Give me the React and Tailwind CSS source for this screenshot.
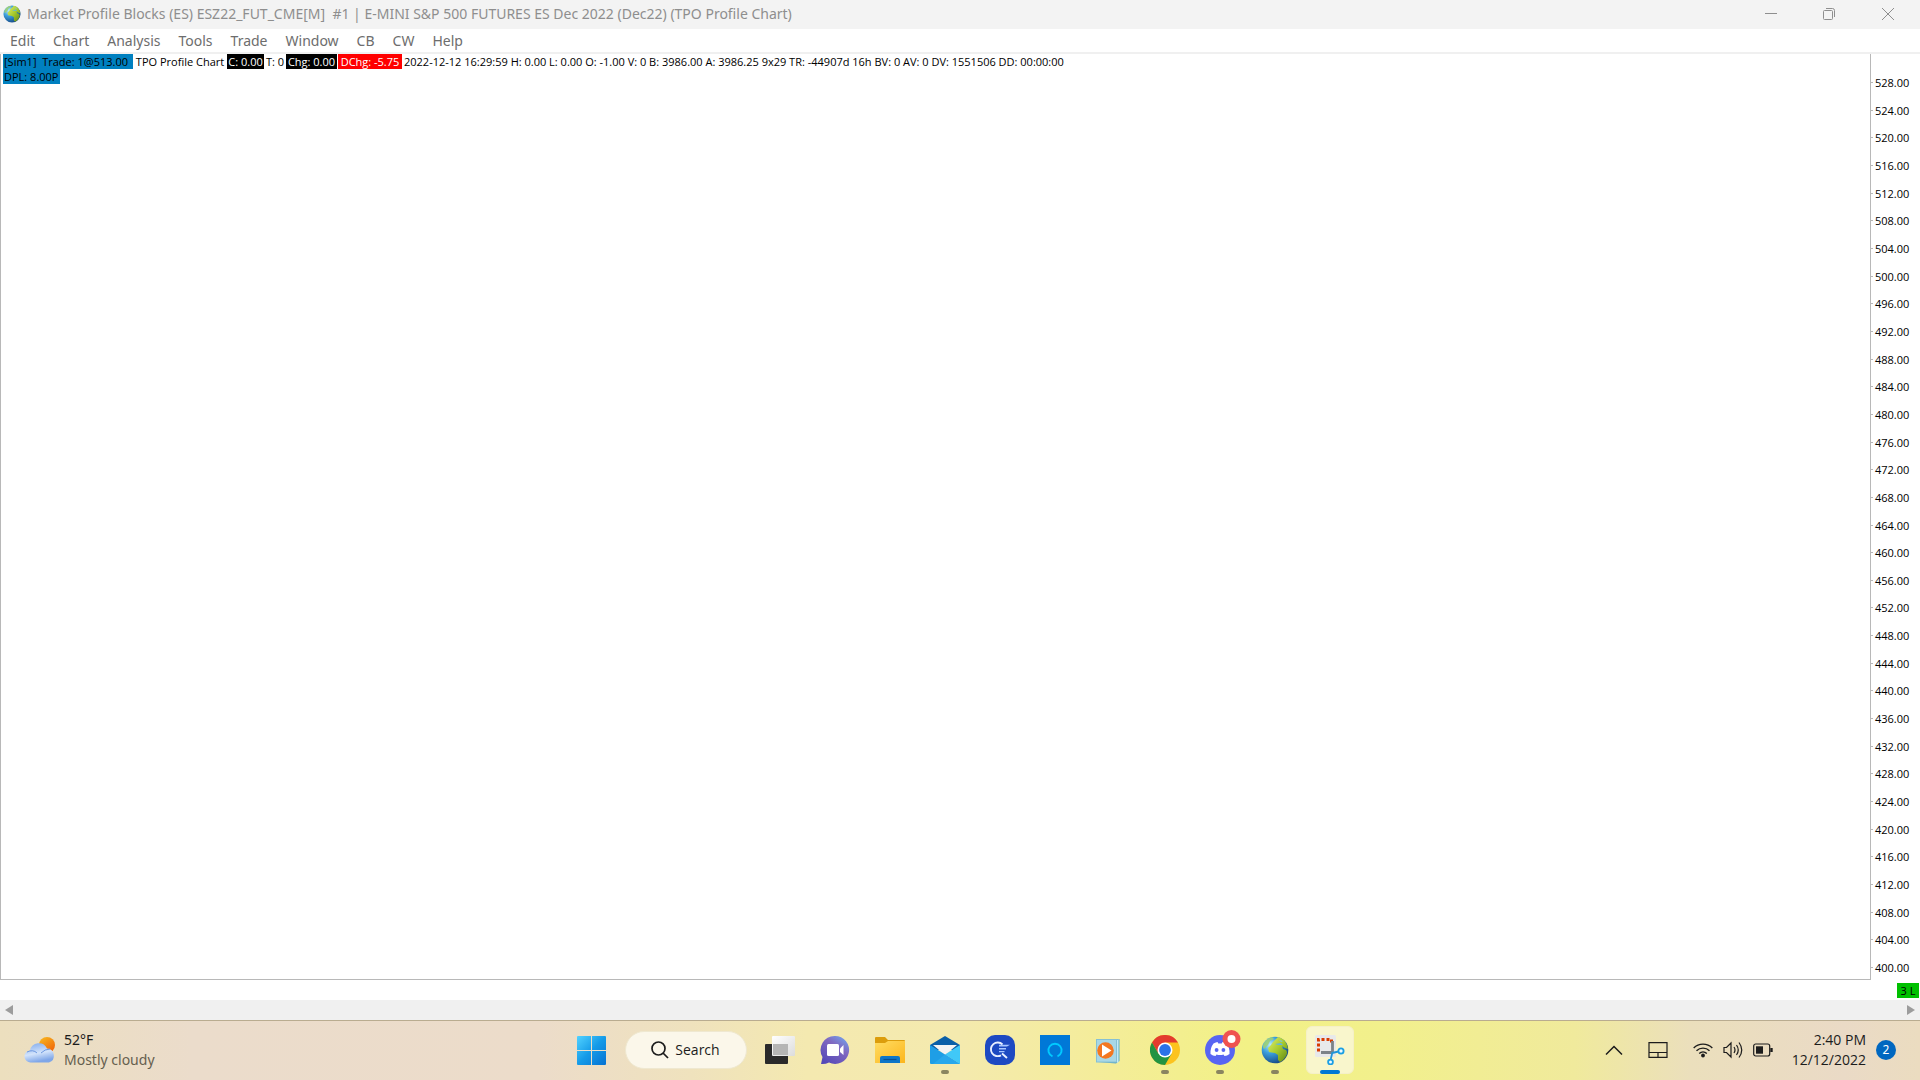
const prices = Array.from({ length: 33 }, (_, i) => (528 - i * 4).toFixed(2));
const menus = ["Edit", "Chart", "Analysis", "Tools", "Trade", "Window", "CB", "CW", "Help"];

function Globe({ className, id }) {
  return (
    <svg viewBox="0 0 28 28" className={className} aria-hidden="true">
      <defs>
        <radialGradient id={id + "s"} cx="0.32" cy="0.3" r="0.8">
          <stop offset="0" stopColor="#b9ecfb" />
          <stop offset="0.4" stopColor="#3c9fdc" />
          <stop offset="1" stopColor="#123f7c" />
        </radialGradient>
        <linearGradient id={id + "l"} x1="0" y1="0" x2="1" y2="1">
          <stop offset="0" stopColor="#e2f06c" />
          <stop offset="0.5" stopColor="#a5c92c" />
          <stop offset="1" stopColor="#5d8414" />
        </linearGradient>
      </defs>
      <circle cx="14" cy="14" r="13.3" fill={`url(#${id}s)`} />
      <path d="M3 7Q6 2 11 1L13 3 9 5 7 9 3 13Q1 11 3 7Z" fill="#9dd070" opacity="0.85" />
      <path d="M12 6L15 3 17 1Q23 2 26 9L27 13 24 12 21 10 22 13 25 14Q27 16 25 20 23 24 19 26L17 24 17 19 14 17 8 16 7 12 10 9Z" fill={`url(#${id}l)`} />
      <path d="M14 8L20 7 22 9 17 9Z" fill="#62b6dc" />
      <path d="M18 4l4 1-2 1z" fill="#7cc6e2" />
    </svg>
  );
}

function Weather() {
  return (
    <svg viewBox="0 0 32 26" className="h-[26px] w-8" aria-hidden="true">
      <defs>
        <linearGradient id="sun" x1="0" y1="0" x2="0.7" y2="1">
          <stop offset="0" stopColor="#f8bb20" />
          <stop offset="1" stopColor="#f0660a" />
        </linearGradient>
        <linearGradient id="cl" x1="0" y1="0" x2="0.3" y2="1">
          <stop offset="0" stopColor="#7fa9ec" />
          <stop offset="0.6" stopColor="#d2e3fb" />
          <stop offset="1" stopColor="#7fa6e8" />
        </linearGradient>
      </defs>
      <circle cx="23" cy="8" r="8" fill="url(#sun)" />
      <path d="M7 25.5a6 6 0 0 1-1-12 9 9 0 0 1 17-2 7.200 7.200 0 0 1 2 14z" fill="url(#cl)" />
      <path d="M3 15q6-3 10 1M17 16q4-4 9-4" fill="none" stroke="#6d98e0" strokeWidth="1" />
    </svg>
  );
}

function Start() {
  return (
    <svg viewBox="0 0 29 29" className="size-[29px]" aria-hidden="true">
      <defs>
        <linearGradient id="win" x1="0" y1="0" x2="1" y2="1">
          <stop offset="0" stopColor="#52d2ff" />
          <stop offset="0.5" stopColor="#159be8" />
          <stop offset="1" stopColor="#0571d2" />
        </linearGradient>
      </defs>
      <path d="M1 0H14V14H0V1Q0 0 1 0ZM15 0H28Q29 0 29 1V14H15ZM0 15H14V29H1Q0 29 0 28ZM15 15H29V28Q29 29 28 29H15Z" fill="url(#win)" />
    </svg>
  );
}

function TaskView() {
  return (
    <svg viewBox="0 0 30 28" className="h-7 w-[30px]" aria-hidden="true">
      <defs>
        <linearGradient id="tw" x1="0" y1="0" x2="1" y2="1">
          <stop offset="0" stopColor="#fff" />
          <stop offset="1" stopColor="#dcdcdc" />
        </linearGradient>
      </defs>
      <rect x="0" y="8" width="23" height="20" rx="1" fill="#2a2a2a" />
      <rect x="7" y="0" width="23" height="20" rx="1" fill="url(#tw)" />
      <rect x="8" y="8" width="15" height="11" fill="#b5b5b5" />
    </svg>
  );
}

function Chat() {
  return (
    <svg viewBox="0 0 30 30" className="size-[30px]" aria-hidden="true">
      <defs>
        <linearGradient id="ch" x1="0.9" y1="0" x2="0.2" y2="1">
          <stop offset="0" stopColor="#72a8f0" />
          <stop offset="0.4" stopColor="#8068c0" />
          <stop offset="1" stopColor="#5448b8" />
        </linearGradient>
      </defs>
      <path d="M15 1a14 14 0 1 1-6 26.600Q5 29.500 1 29L2.500 22A14 14 0 0 1 15 1Z" fill="url(#ch)" />
      <rect x="7" y="9" width="12" height="12" rx="1.500" fill="#fff" />
      <path d="M20 13.500L23.500 10V20L20 17Z" fill="#fff" />
    </svg>
  );
}

function Folder() {
  return (
    <svg viewBox="0 0 30 27" className="h-[27px] w-[30px]" aria-hidden="true">
      <defs>
        <linearGradient id="fo" x1="0" y1="0" x2="1" y2="1">
          <stop offset="0" stopColor="#ffdc62" />
          <stop offset="1" stopColor="#fcb61c" />
        </linearGradient>
      </defs>
      <path d="M0 1Q0 0 1 0H10L13 3H29Q30 3 30 4V10H0Z" fill="#dc9d0c" />
      <path d="M0 6H10L13 4H30V26H0Z" fill="url(#fo)" />
      <path d="M5 26V21Q5 19 7 19H23Q25 19 25 21V26Z" fill="#0d76c8" />
      <path d="M8.500 22.500H21.500" stroke="#064f94" strokeWidth="1.200" />
    </svg>
  );
}

function Mail() {
  return (
    <svg viewBox="0 0 30 28" className="h-7 w-[30px]" aria-hidden="true">
      <path d="M0 9L15 0L30 9V14H0Z" fill="#0a5fa8" />
      <path d="M3 9H27L15 19Z" fill="#f3f3f3" />
      <path d="M0 9L30 28H1Q0 28 0 27Z" fill="#1e9ee6" />
      <path d="M30 9L15 18.500L30 28Z" fill="#40c8f8" />
      <path d="M15 18.500L30 28H3Z" fill="#28a8ec" />
    </svg>
  );
}

function Finder() {
  return (
    <svg viewBox="0 0 30 30" className="size-[30px]" aria-hidden="true">
      <rect width="30" height="30" rx="10" fill="#1d49c2" />
      <path d="M17.500 9.500A6.800 6.800 0 1 0 16 20.300M17 18.500L22 23" fill="none" stroke="#e9efff" strokeWidth="1.900" />
      <path d="M14 9.800H25L22 11.600H14ZM14 13H21V14.500H14ZM14 16H19.500V17.300H14Z" fill="#a9c6ff" />
    </svg>
  );
}

function Alexa() {
  return (
    <svg viewBox="0 0 30 30" className="size-[30px]" aria-hidden="true">
      <rect width="30" height="30" fill="#0078d7" />
      <path d="M12.500 21.400A6.600 6.600 0 1 1 17.500 21.400" fill="none" stroke="#00caff" strokeWidth="1.900" />
    </svg>
  );
}

function Media() {
  return (
    <svg viewBox="0 0 30 30" className="size-[30px]" aria-hidden="true">
      <path d="M3 4H24.500V26L21 28.500 3 27Z" fill="#5fa9c4" />
      <path d="M22 5l1.500-1v23l-1.500 1z" fill="#c7ebf4" />
      <rect x="1.500" y="4.500" width="20" height="22.500" fill="#a8d7e6" stroke="#86c0d4" />
      <circle cx="10.500" cy="15.500" r="8.300" fill="#f47720" />
      <path d="M7 9.500V21.500L16.500 15.500Z" fill="#fff" />
    </svg>
  );
}

function Chrome() {
  return (
    <svg viewBox="0 0 30 30" className="size-[30px]" aria-hidden="true">
      <circle cx="15" cy="15" r="15" fill="#fcc31e" />
      <path d="M15 7.500H28A15 15 0 0 0 2 7.500L8.500 18.700Z" fill="#e33b2e" />
      <path d="M2 7.500A15 15 0 0 0 15 30L21.500 18.700 8.500 18.700Z" fill="#229342" />
      <circle cx="15" cy="15" r="7.500" fill="#fff" />
      <circle cx="15" cy="15" r="5.900" fill="#2a72e8" />
    </svg>
  );
}

function Discord() {
  return (
    <svg viewBox="0 0 36 36" className="-mt-1 ml-1.5 h-9 w-9 shrink-0" aria-hidden="true">
      <circle cx="15" cy="20" r="15" fill="#5865f2" />
      <path d="M8.500 13.500Q11 12 12.500 12L13.300 13.500H16.700L17.500 12Q20 12.300 21.700 13.500 25 18 24.500 24 22 26 19.500 26L18.500 24.500Q15 25.500 11.500 24.500L10.500 26Q8 26 5.500 24 5 18 8.500 13.500Z" fill="#fff" />
      <ellipse cx="11.600" cy="20" rx="1.900" ry="2.100" fill="#5865f2" />
      <ellipse cx="18.400" cy="20" rx="1.900" ry="2.100" fill="#5865f2" />
      <circle cx="26.500" cy="9" r="9" fill="#ef5350" />
      <circle cx="26.500" cy="9" r="4" fill="#fff" />
    </svg>
  );
}

function Snip() {
  return (
    <svg viewBox="0 0 30 30" className="size-[30px]" aria-hidden="true">
      <rect x="0" y="0" width="21" height="22" rx="1.500" fill="#e8e9ea" />
      <path d="M3.500 16.500V4.500H16.500V8" fill="none" stroke="#d83b01" strokeWidth="3" strokeDasharray="3 2" />
      <path d="M17.500 6V18M6 17.500H18" stroke="#7c8388" strokeWidth="2.800" />
      <path d="M17.500 17L15.800 24M17 18L23.500 16.500" stroke="#2195d8" strokeWidth="1.800" />
      <circle cx="26" cy="16" r="2.600" fill="#eefaff" stroke="#1a9ee4" strokeWidth="1.800" />
      <circle cx="15.500" cy="27" r="2.400" fill="#eefaff" stroke="#1a9ee4" strokeWidth="1.800" />
    </svg>
  );
}

const apps = [
  { name: "Task view", icon: <TaskView /> },
  { name: "Chat", icon: <Chat /> },
  { name: "File Explorer", icon: <Folder /> },
  { name: "Mail", icon: <Mail />, open: true },
  { name: "Quick search", icon: <Finder /> },
  { name: "Alexa", icon: <Alexa /> },
  { name: "Media Player", icon: <Media /> },
  { name: "Chrome", icon: <Chrome />, open: true },
  { name: "Discord", icon: <Discord />, open: true },
  { name: "Sierra Chart", icon: <Globe id="gb" className="size-7" />, open: true },
  { name: "Snipping Tool", icon: <Snip />, active: true },
];

function TitleBar() {
  return (
    <header className="flex h-[29px] shrink-0 items-center bg-[#f3f3f3] pb-px pl-[3px] text-[#8e8e8e]">
      <Globe id="ga" className="size-[18px] shrink-0" />
      <h1 className="ml-1.5 grow whitespace-pre text-sm">
        {"Market Profile Blocks (ES) ESZ22_FUT_CME[M]  #1 | E-MINI S&P 500 FUTURES ES Dec 2022 (Dec22) (TPO Profile Chart)"}
      </h1>
      <button aria-label="Minimize" className="flex h-full w-[58px] items-center justify-center">
        <svg viewBox="0 0 12 12" className="size-3"><path d="M0 5.500H12" stroke="#8e8e8e" /></svg>
      </button>
      <button aria-label="Restore" className="flex h-full w-[58px] items-center justify-center">
        <svg viewBox="0 0 12 12" className="size-3" fill="none" stroke="#8e8e8e">
          <rect x="0.500" y="2.500" width="9" height="9" rx="1" />
          <path d="M3 0.500H9.500Q11.500 0.500 11.500 2.500V9" />
        </svg>
      </button>
      <button aria-label="Close" className="mr-0.5 flex h-full w-[60px] items-center justify-center">
        <svg viewBox="0 0 12 12" className="size-3"><path d="M0 0L12 12M12 0L0 12" stroke="#8e8e8e" /></svg>
      </button>
    </header>
  );
}

function InfoLine() {
  return (
    <div className="flex flex-col items-start whitespace-pre pl-0.5 font-['Open_Sans',sans-serif] text-[11px] leading-[15px] text-black">
      <div className="flex">
        <span className="w-[130px] shrink-0 bg-[#0080c0] pl-px">[Sim1]  Trade: 1@513.00</span>
        <span className="w-[94px] shrink-0 text-center">TPO Profile Chart</span>
        <span className="w-[37px] shrink-0 bg-black text-center text-white">C: 0.00</span>
        <span className="w-[22px] shrink-0 text-center">T: 0</span>
        <span className="w-[51px] shrink-0 bg-black text-center text-white">Chg: 0.00</span>
        <span className="ml-px w-16 shrink-0 bg-[#ff0000] text-center text-white">DChg: -5.75</span>
        <span className="shrink-0 pl-0.5">2022-12-12 16:29:59 H: 0.00 L: 0.00 O: -1.00 V: 0 B: 3986.00 A: 3986.25 9x29 TR: -44907d 16h BV: 0 AV: 0 DV: 1551506 DD: 00:00:00</span>
      </div>
      <span className="w-[57px] bg-[#0080c0] pl-px">DPL: 8.00P</span>
    </div>
  );
}

function Tray() {
  return (
    <div className="flex flex-1 items-center justify-end pr-6 text-[#1c1c1c]">
      <button aria-label="Show hidden icons" className="mr-[25px]">
        <svg viewBox="0 0 18 10" className="h-2.5 w-[18px]" fill="none" stroke="#1c1c1c" strokeWidth="1.500"><path d="M1 9.500L9 1.500L17 9.500" /></svg>
      </button>
      <button aria-label="Touchpad" className="mr-[25px]">
        <svg viewBox="0 0 20 16" className="h-4 w-5" fill="none" stroke="#1c1c1c" strokeWidth="1.200"><path d="M1 0.600H19V15.400H1ZM1 10.500H19M10 10.500V15" /></svg>
      </button>
      <button aria-label="Network, sound and battery" className="mr-[18px] flex items-center gap-2.5">
        <svg viewBox="0 0 20 16" className="h-4 w-5" fill="none" stroke="#1c1c1c" strokeWidth="1.400">
          <path d="M0.700 6A13 13 0 0 1 19.300 6M3.500 8.800A9.300 9.300 0 0 1 16.500 8.800M6.200 11.500A5.600 5.600 0 0 1 13.800 11.500" />
          <circle cx="10" cy="13.500" r="1.200" fill="#1c1c1c" />
        </svg>
        <svg viewBox="0 0 20 18" className="h-[18px] w-5" fill="none" stroke="#1c1c1c" strokeWidth="1.200">
          <path d="M1 6.500H3.500L8 2V16L3.500 11.500H1ZM11 6Q13 9 11 12M13.500 4Q17 9 13.500 14M16 1.500Q21.500 9 16 16.500" />
        </svg>
        <svg viewBox="0 0 20 14" className="h-3.5 w-5" fill="none" stroke="#1c1c1c" strokeWidth="1.200">
          <rect x="0.700" y="1" width="16" height="12" rx="2" />
          <rect x="3" y="3.300" width="7" height="7.400" fill="#1c1c1c" stroke="none" />
          <path d="M18.500 5V9" strokeWidth="2.400" />
        </svg>
      </button>
      <button className="w-[75px] text-right font-['Open_Sans',sans-serif] text-sm leading-5">
        <span className="block">2:40 PM</span>
        <span className="block">12/12/2022</span>
      </button>
      <button aria-label="2 notifications" className="ml-2.5 size-5 rounded-full bg-[#0067c0] text-xs leading-5 text-white">2</button>
    </div>
  );
}

function Taskbar() {
  return (
    <footer className="flex h-[60px] shrink-0 border-t border-[#b9ac90] bg-[linear-gradient(90deg,#ecdfbe_0%,#ebdccb_10%,#ecdcca_28%,#efe2bd_36%,#f4e9b0_42%,#f4eaae_50%,#f4ed98_58%,#f2f186_65%,#f2f08c_72%,#f0ea9c_82%,#ebdfbc_88%,#eadac6_96%,#ebdcc0_100%)] pb-px">
      <div className="flex flex-1 items-center pl-6">
        <button className="flex items-center gap-2 text-left text-sm leading-5">
          <Weather />
          <span>
            <span className="block text-[#1c1c1c]">52°F</span>
            <span className="block text-[#66604f]">Mostly cloudy</span>
          </span>
        </button>
      </div>
      <nav className="flex items-center pl-px" aria-label="Taskbar">
        <button aria-label="Start" className="flex w-[55px] justify-center"><Start /></button>
        <button className="mx-1.5 flex h-[38px] w-[122px] items-center justify-center gap-1.5 rounded-full border border-[#efe8d0] bg-[#fbf7ea] font-['Open_Sans',sans-serif] text-sm text-[#1c1c1c]">
          <svg viewBox="0 0 18 18" className="size-[18px]" fill="none" stroke="#1c1c1c" strokeWidth="1.700"><circle cx="7.500" cy="7.500" r="6.500" /><path d="M12 12L17 17" /></svg>
          Search
        </button>
        {apps.map((a) => (
          <div key={a.name} className="flex w-[55px] justify-center">
            <button
              aria-label={a.name}
              className={
                a.active
                  ? "relative flex h-12 w-12 items-center justify-center rounded-md border border-[#f5f0c8] bg-[#f9f6cc]"
                  : "relative flex h-12 w-12 items-center justify-center"
              }
            >
              {a.icon}
              {a.open && <span className="absolute bottom-0 h-1 w-2 rounded-full bg-[#8a8560]" />}
              {a.active && <span className="absolute -bottom-px h-1 w-5 rounded-full bg-[#0078d4]" />}
            </button>
          </div>
        ))}
      </nav>
      <Tray />
    </footer>
  );
}

export default function App() {
  return (
    <div className="flex h-screen flex-col overflow-hidden bg-white font-['Noto_Sans','Open_Sans',sans-serif]">
      <TitleBar />
      <nav className="flex h-[25px] shrink-0 items-center gap-[18px] border-b-2 border-[#f0f0f0] pl-2.5 pt-px text-sm text-[#6d6d6d]" aria-label="Menu">
        {menus.map((m) => (
          <button key={m}>{m}</button>
        ))}
      </nav>
      <main className="flex min-h-0 grow flex-col">
        <div className="flex min-h-0 grow">
          <section className="min-w-0 grow border-x border-b border-[#b8b8b8]" aria-label="TPO Profile Chart">
            <InfoLine />
          </section>
          <ol className="flex w-[49px] flex-col justify-between pb-[5px] pt-[21px] font-['Open_Sans',sans-serif] text-[11px] leading-[15px] text-black">
            {prices.map((p) => (
              <li key={p} className="flex items-center gap-0.5">
                <span className="h-px w-0.5 bg-[#b8b8b8]" />
                {p}
              </li>
            ))}
          </ol>
        </div>
        <div className="flex h-5 items-center justify-end pr-px font-['Open_Sans',sans-serif] text-[11px] leading-[15px]">
          <span className="w-[22px] bg-[#00c000] text-center text-black">3 L</span>
        </div>
        <div className="flex h-5 items-center justify-between bg-[#f0f0f0] px-[5px]">
          <button aria-label="Scroll left"><svg viewBox="0 0 8 10" className="h-2.5 w-2"><path d="M8 0V10L0 5Z" fill="#9c9c9c" /></svg></button>
          <button aria-label="Scroll right"><svg viewBox="0 0 8 10" className="h-2.5 w-2"><path d="M0 0V10L8 5Z" fill="#9c9c9c" /></svg></button>
        </div>
      </main>
      <Taskbar />
    </div>
  );
}
